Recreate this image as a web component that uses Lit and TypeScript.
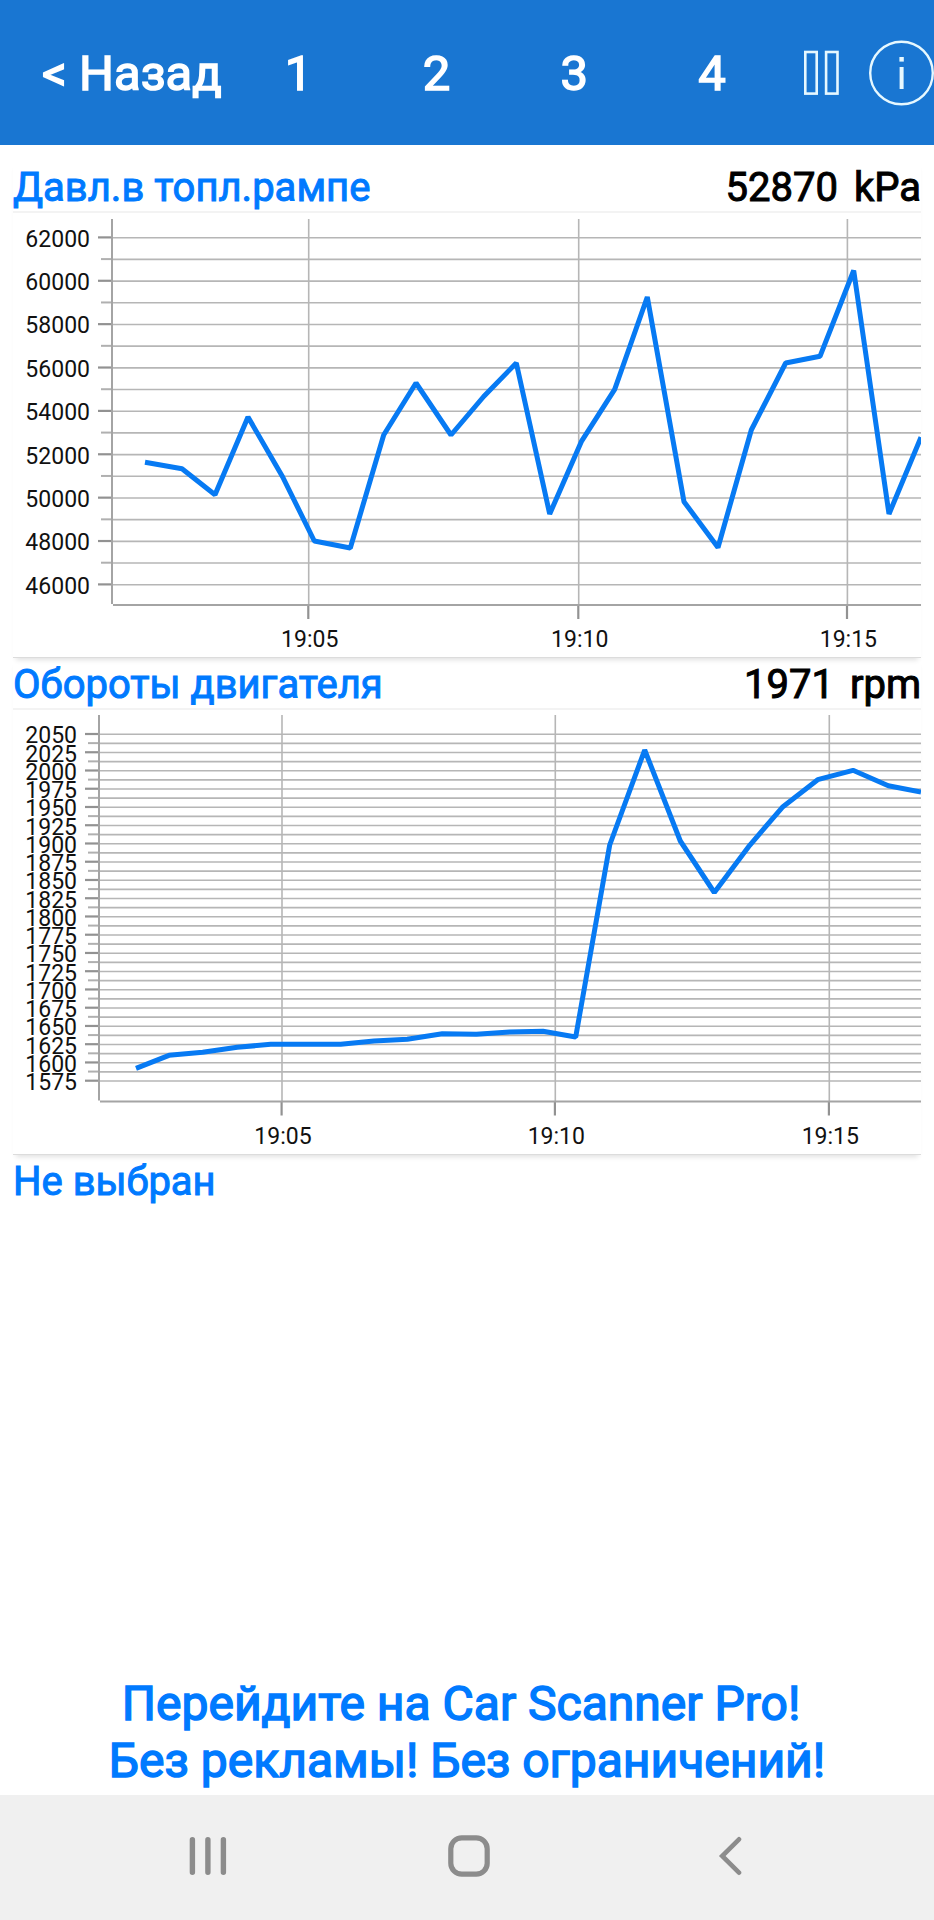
import { LitElement, html, svg, css } from "lit";
import { customElement, property } from "lit/decorators.js";

interface TimeMark {
  x: number;
  label: string;
}

interface ChartSpec {
  name: string;
  value: string;
  unit: string;
  axisX: number;
  top: number;
  bottom: number;
  max: number;
  min: number;
  step: number;
  firstY: number;
  lastY: number;
  times: TimeMark[];
  points: string;
}

const charts: ChartSpec[] = [
  {
    name: "Давл.в топл.рампе",
    value: "52870",
    unit: "kPa",
    axisX: 99,
    top: 6,
    bottom: 392,
    max: 62000,
    min: 46000,
    step: 2000,
    firstY: 24.7,
    lastY: 371.7,
    times: [
      { x: 295.7, label: "19:05" },
      { x: 565.7, label: "19:10" },
      { x: 834.4, label: "19:15" },
    ],
    points:
      "132,249.3 169,255.7 202,281.7 235,204 269.7,264 301.3,328 337.3,335 370.7,222 403,170 438,222 470.7,183.5 503.3,150 536.7,301 568.3,228.7 601.7,176.3 634.3,84 671,288.7 705,334.5 738.3,217 772.7,150 807,143.3 840.7,57.5 876,301 908,224.3",
  },
  {
    name: "Обороты двигателя",
    value: "1971",
    unit: "rpm",
    axisX: 86,
    top: 5,
    bottom: 391.5,
    max: 2050,
    min: 1575,
    step: 25,
    firstY: 24.3,
    lastY: 371,
    times: [
      { x: 269, label: "19:05" },
      { x: 542.3, label: "19:10" },
      { x: 816.3, label: "19:15" },
    ],
    points:
      "123,358.3 156,345.3 189.7,342.3 224.3,337.3 257.7,334.3 327.7,334.3 361,331 394.3,329.3 429.3,323.7 463.3,324.3 496.7,322 530,321.3 562.7,327 596.7,135 631.7,40 667.3,131 701.3,182.5 736.7,135.3 769.3,97.3 804.7,69.7 840,60.3 875.3,75.7 908,82",
  },
];

@customElement("sensor-chart")
export class SensorChart extends LitElement {
  @property({ attribute: false }) spec!: ChartSpec;

  static styles = css`
    :host {
      display: block;
    }
    .head {
      display: flex;
      align-items: flex-end;
      justify-content: space-between;
      height: 52px;
      font-size: 40px;
      line-height: 46px;
      box-sizing: border-box;
      border-bottom: 2px solid #f3f3f3;
      -webkit-text-stroke: 1px currentColor;
    }
    .name {
      margin: 0;
      font-size: 40px;
      font-weight: 400;
      color: #007aff;
      white-space: nowrap;
    }
    .reading {
      display: flex;
      gap: 16px;
      color: #000;
      white-space: nowrap;
    }
    .plot {
      display: block;
      width: 100%;
      height: auto;
    }
    .grid {
      stroke: #b6b6b6;
      stroke-width: 1.6;
    }
    .axis {
      stroke: #a4a4a4;
      stroke-width: 2;
    }
    .major {
      stroke: #929292;
      stroke-width: 2.2;
    }
    .minor {
      stroke: #b0b0b0;
      stroke-width: 2;
    }
    .line {
      fill: none;
      stroke: #077af3;
      stroke-width: 5;
      stroke-linejoin: bevel;
    }
    .label {
      font-size: 23px;
      fill: #111;
    }
    .end {
      text-anchor: end;
    }
    .mid {
      text-anchor: middle;
    }
  `;

  private rows() {
    const s = this.spec;
    const count = ((s.max - s.min) / s.step) * 2;
    const gap = (s.lastY - s.firstY) / count;
    return Array.from({ length: count + 1 }, (_, i) => {
      const y = s.firstY + gap * i;
      const major = i % 2 === 0;
      return svg`
        <line class="grid" x1=${s.axisX} x2="908" y1=${y} y2=${y}></line>
        <line class=${major ? "major" : "minor"} x1=${s.axisX - (major ? 14 : 11)} x2=${s.axisX} y1=${y - 0.3} y2=${y - 0.3}></line>
        ${major
          ? svg`<text class="label end" x=${s.axisX - 22} y=${y + 9}>${s.max - (i / 2) * s.step}</text>`
          : null}`;
    });
  }

  render() {
    const s = this.spec;
    return html`
      <div class="head">
        <h2 class="name">${s.name}</h2>
        <div class="reading"><span>${s.value}</span><span>${s.unit}</span></div>
      </div>
      <svg class="plot" viewBox="0 0 908 444" role="img" aria-label=${s.name}>
        ${this.rows()}
        ${s.times.map(
          (t) => svg`
            <line class="grid" x1=${t.x} x2=${t.x} y1=${s.top} y2=${s.bottom}></line>
            <line class="major" x1=${t.x - 0.4} x2=${t.x - 0.4} y1=${s.bottom} y2=${s.bottom + 14}></line>
            <text class="label mid" x=${t.x + 1} y=${s.bottom + 42}>${t.label}</text>`
        )}
        <line class="axis" x1=${s.axisX} x2=${s.axisX} y1=${s.top} y2=${s.bottom - 1}></line>
        <line class="axis" x1=${s.axisX + 1} x2="908" y1=${s.bottom} y2=${s.bottom}></line>
        <polyline class="line" points=${s.points}></polyline>
      </svg>
    `;
  }
}

@customElement("app-root")
export class AppRoot extends LitElement {
  static styles = css`
    :host {
      display: flex;
      flex-direction: column;
      min-height: 100vh;
      background: #fff;
      font-family: Roboto, "Noto Sans", sans-serif;
    }
    button {
      margin: 0;
      padding: 0;
      border: 0;
      background: none;
      color: inherit;
      font: inherit;
      cursor: pointer;
    }
    svg {
      display: block;
      fill: none;
    }
    .bar {
      display: grid;
      grid-template-columns: 5fr 3fr 3fr 3fr 3fr 80px 73px;
      align-items: center;
      height: 145px;
      background: #1976d2;
      color: #fff;
      font-size: 49px;
      line-height: 60px;
      white-space: nowrap;
      -webkit-text-stroke: 1.5px currentColor;
    }
    .page {
      padding-top: 2px;
    }
    .back {
      padding: 2px 0 0 42px;
      text-align: left;
    }
    .icon {
      display: flex;
      justify-content: center;
    }
    .info {
      justify-content: flex-end;
    }
    .content {
      flex: 1;
      padding: 16px 13px 0;
    }
    .cell {
      border-bottom: 1px solid #dcdcdc;
      box-shadow: 0 5px 5px -3px rgba(0, 0, 0, 0.12);
    }
    .empty {
      margin: 0;
      font-size: 40px;
      font-weight: 400;
      line-height: 54px;
      color: #007aff;
      -webkit-text-stroke: 1px currentColor;
    }
    .promo {
      padding-bottom: 6px;
      font-size: 48px;
      line-height: 57px;
      text-align: center;
      white-space: pre;
      color: #007aff;
      text-decoration: none;
      -webkit-text-stroke: 1.5px currentColor;
    }
    .nav {
      display: grid;
      grid-template-columns: repeat(3, 1fr);
      height: 125px;
      box-sizing: border-box;
      padding: 0 74px 4px 78px;
      background: #f0f0f0;
    }
    .nav button {
      display: flex;
      align-items: center;
      justify-content: center;
    }
  `;

  render() {
    return html`
      <header class="bar">
        <button class="back">&lt; Назад</button>
        ${[1, 2, 3, 4].map((n) => html`<button class="page">${n}</button>`)}
        <button class="icon" aria-label="Пауза">
          <svg width="36" height="46" viewBox="0 0 36 46" stroke="#e6f8ff" stroke-width="2.6">
            <rect x="2.3" y="2" width="11.4" height="41.6"></rect>
            <rect x="23.1" y="2" width="11.4" height="41.6"></rect>
          </svg>
        </button>
        <button class="icon info" aria-label="Информация">
          <svg width="66" height="66" viewBox="0 0 66 66">
            <circle cx="33.5" cy="33" r="31.3" stroke="#e6f8ff" stroke-width="2.4"></circle>
            <rect x="31.4" y="17" width="4.4" height="4.6" fill="#e6f8ff"></rect>
            <rect x="31.6" y="27" width="4" height="22" fill="#e6f8ff"></rect>
          </svg>
        </button>
      </header>
      <main class="content">
        ${charts.map(
          (c) => html`<section class="cell"><sensor-chart .spec=${c}></sensor-chart></section>`
        )}
        <h2 class="empty">Не выбран</h2>
      </main>
      <a class="promo" href="#pro">${"Перейдите на Car Scanner Pro! \nБез рекламы! Без ограничений!"}</a>
      <nav class="nav">
        <button aria-label="Недавние">
          <svg width="38" height="40" viewBox="0 0 38 40" stroke="#8c8c8c" stroke-width="5.4" stroke-linecap="round">
            <path d="M3.4 3.7V36.3M18.9 3.7V36.3M34.4 3.7V36.3"></path>
          </svg>
        </button>
        <button aria-label="Домой">
          <svg width="42" height="42" viewBox="0 0 42 42" stroke="#8c8c8c" stroke-width="5.2">
            <rect x="2.8" y="2.8" width="36.4" height="36.4" rx="11"></rect>
          </svg>
        </button>
        <button aria-label="Назад">
          <svg width="24" height="40" viewBox="0 0 24 40" stroke="#8c8c8c" stroke-width="4.6" stroke-linecap="round">
            <path d="M21 3.3L4.2 20L21 36.7"></path>
          </svg>
        </button>
      </nav>
    `;
  }
}
